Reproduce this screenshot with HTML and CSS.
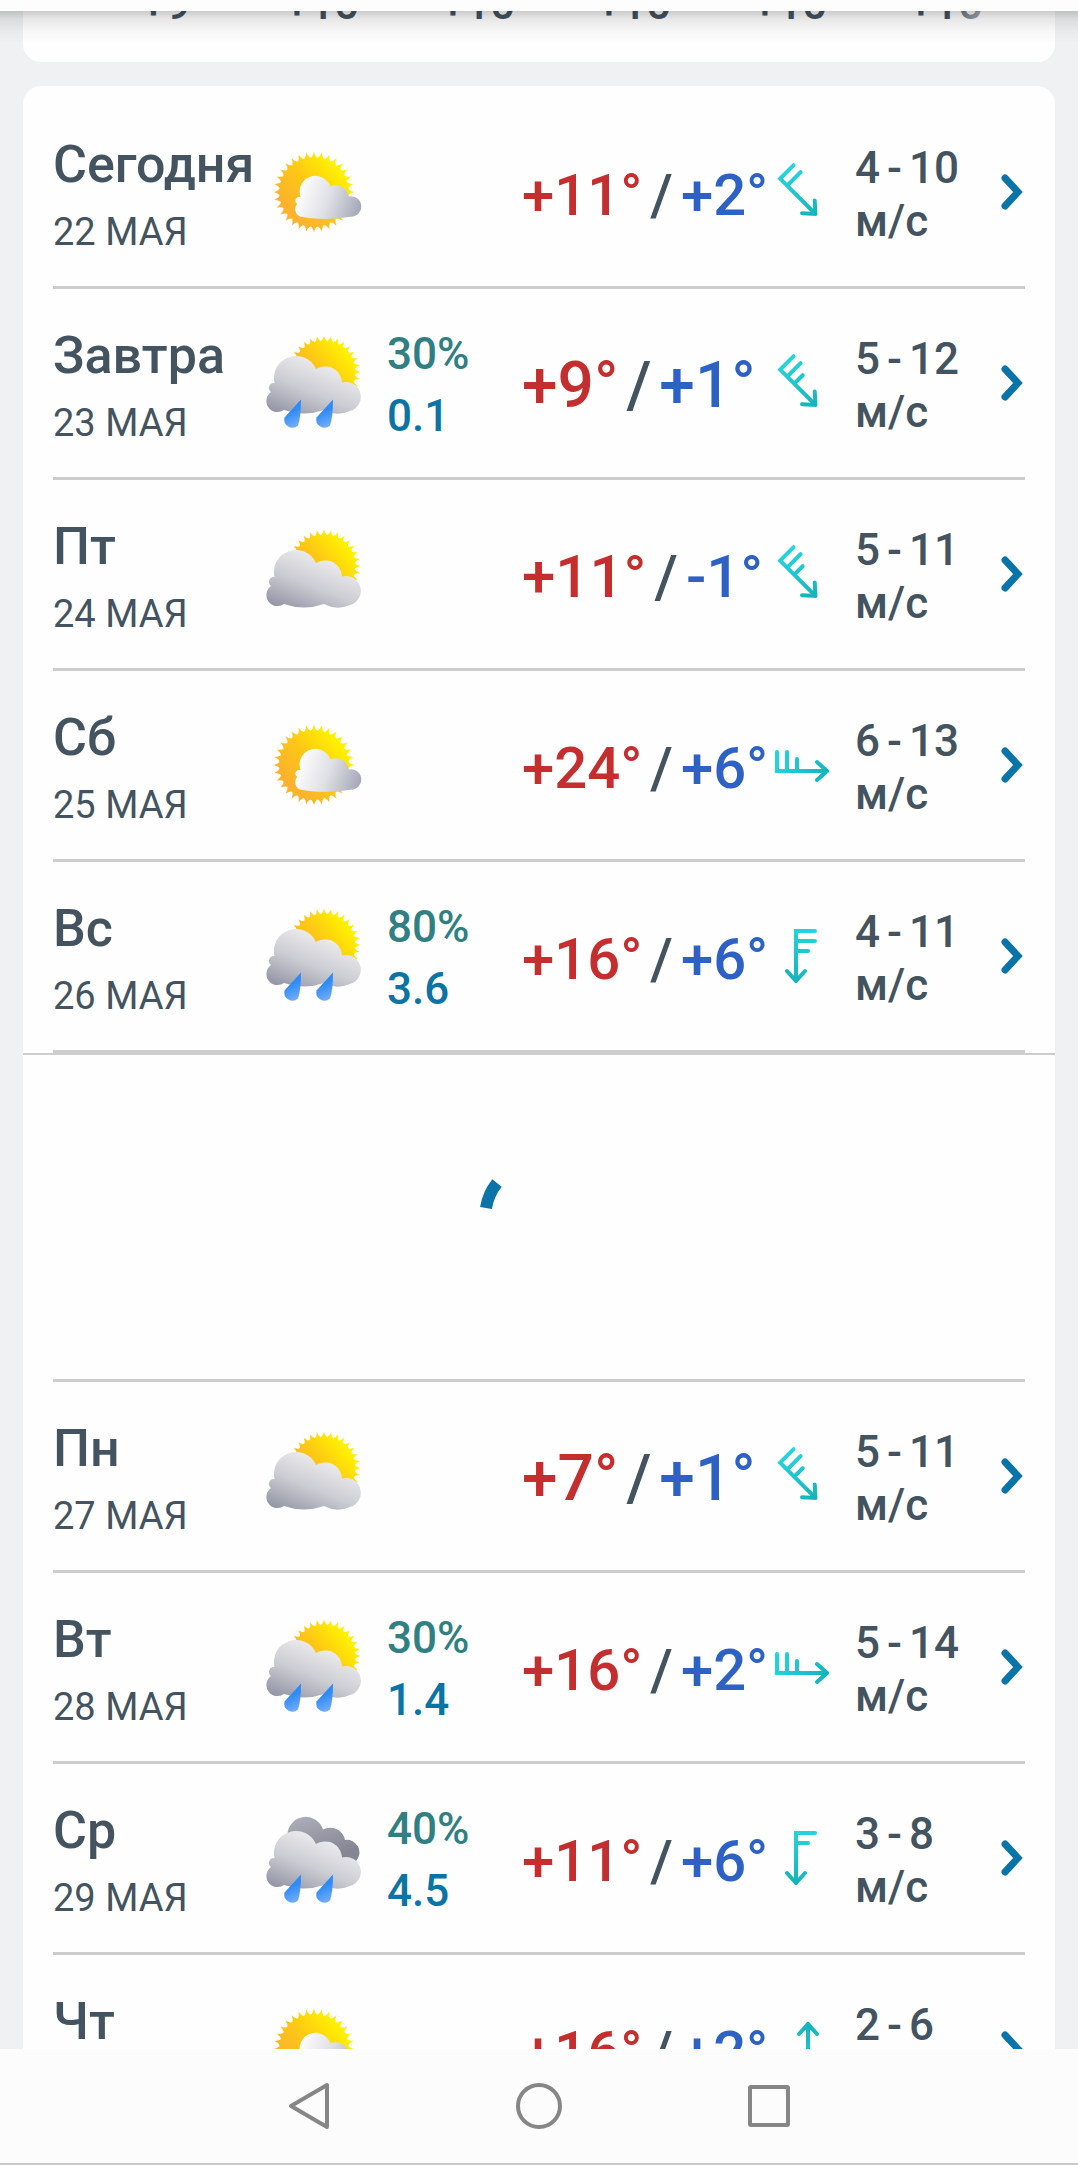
FILE: index.html
```html
<!DOCTYPE html>
<html lang="ru">
<head>
<meta charset="utf-8">
<meta name="viewport" content="width=device-width, initial-scale=1">
<title>Прогноз погоды</title>
<link rel="stylesheet" href="styles.css">
</head>
<body>
<svg class="defs" aria-hidden="true">
  <defs>
    <linearGradient id="g-sun" gradientUnits="userSpaceOnUse" x1="-24" y1="18" x2="24" y2="-22">
      <stop offset="0" stop-color="#fcb22c"/><stop offset=".5" stop-color="#fdc815"/><stop offset="1" stop-color="#fff000"/>
    </linearGradient>
    <linearGradient id="g-cloud" gradientUnits="userSpaceOnUse" x1="22" y1="84" x2="46" y2="26">
      <stop offset="0" stop-color="#9597a7"/><stop offset=".5" stop-color="#cccdd3"/><stop offset="1" stop-color="#ececee"/>
    </linearGradient>
    <linearGradient id="g-white" gradientUnits="userSpaceOnUse" x1="36" y1="48" x2="94" y2="68">
      <stop offset="0" stop-color="#fafafa"/><stop offset=".45" stop-color="#dfe0e5"/><stop offset="1" stop-color="#a4a7b7"/>
    </linearGradient>
    <linearGradient id="g-dark" gradientUnits="userSpaceOnUse" x1="60" y1="48" x2="46" y2="4">
      <stop offset="0" stop-color="#858694"/><stop offset="1" stop-color="#acacb8"/>
    </linearGradient>
    <linearGradient id="g-drop" gradientUnits="userSpaceOnUse" x1="22" y1="78" x2="30" y2="96">
      <stop offset="0" stop-color="#2f8bf6"/><stop offset="1" stop-color="#84b5f5"/>
    </linearGradient>
    <linearGradient id="g-wind" gradientUnits="userSpaceOnUse" x1="0" y1="20" x2="54" y2="38">
      <stop offset="0" stop-color="#22d6de"/><stop offset="1" stop-color="#14b2ba"/>
    </linearGradient>
    <g id="ray1"><path d="M-3.6-34 Q-1.200-35.5 0-40.500 Q1.200-35.5 3.6-34z" fill="#fff"/></g>
    <g id="ray2"><use href="#ray1"/><use href="#ray1" transform="rotate(11.25)"/></g>
    <g id="ray4"><use href="#ray2"/><use href="#ray2" transform="rotate(22.5)"/></g>
    <g id="ray8"><use href="#ray4"/><use href="#ray4" transform="rotate(45)"/></g>
    <g id="ray16"><use href="#ray8"/><use href="#ray8" transform="rotate(90)"/></g>
    <mask id="m-sun" maskUnits="userSpaceOnUse" x="-42" y="-42" width="84" height="84">
      <circle r="34.800" fill="#fff"/><use href="#ray16"/><use href="#ray16" transform="rotate(180)"/>
    </mask>
    <g id="sun"><rect x="-42" y="-42" width="84" height="84" fill="url(#g-sun)" mask="url(#m-sun)"/></g>
    <path id="cloud" fill="url(#g-cloud)" d="M18 78A11 11 0 0 1 5 60A5 5 0 0 1 8.500 51A22 22 0 0 1 50 37A17 17 0 0 1 76 50.500A14.800 14.800 0 0 1 84 79A30 30 0 0 1 58 78A60 60 0 0 1 18 78z"/>
    <path id="drop" fill="url(#g-drop)" d="M35 64.500L18.500 82.500A8.200 8.200 0 0 0 32 90.500Q35 82 35 64.500z"/>
    <symbol id="w-sun" viewBox="0 0 96 96">
      <use href="#sun" transform="translate(48 48)"/>
      <path fill="url(#g-white)" d="M36 73A8 8 0 0 1 31 60A4 4 0 0 1 34.500 53A15.600 15.600 0 0 1 64.500 42.500A12.500 12.500 0 0 1 82.500 52.500A10.300 10.300 0 1 1 85 72.800A150 150 0 0 1 36 73z"/>
    </symbol>
    <symbol id="w-cloud" viewBox="0 0 96 96">
      <use href="#sun" transform="translate(58 40) scale(.9)"/><use href="#cloud"/>
    </symbol>
    <symbol id="w-rain" viewBox="0 0 96 96">
      <use href="#sun" transform="translate(58 37) scale(.9)"/><use href="#cloud" y="-3"/>
      <use href="#drop"/><use href="#drop" x="32"/>
    </symbol>
    <symbol id="w-overcast" viewBox="0 0 96 96">
      <path fill="url(#g-dark)" d="M21.500 24A18.200 18.200 0 0 1 57 19.500A15 15 0 0 1 79 30A12.500 12.500 0 0 1 90 51L30 51z"/>
      <use href="#cloud" y="-3"/><use href="#drop"/><use href="#drop" x="32"/>
    </symbol>
    <symbol id="wind1" viewBox="0 0 54 54">
      <path class="barb" d="M2 14V33H52M12 21V33M42 24L52 33L42 42"/>
    </symbol>
    <symbol id="wind2" viewBox="0 0 54 54">
      <path class="barb" d="M2 14V33H52M12 14V33M42 24L52 33L42 42"/>
    </symbol>
    <symbol id="wind3" viewBox="0 0 54 54">
      <path class="barb" d="M2 14V33H52M12 14V33M22 21V33M42 24L52 33L42 42"/>
    </symbol>
    <symbol id="chevron" viewBox="0 0 24 36">
      <path d="M4 4L17 18L4 32" fill="none" stroke="#0a74a8" stroke-width="7" stroke-linecap="round" stroke-linejoin="miter"/>
    </symbol>
  </defs>
</svg>

<div class="app">
  <header class="topbar"></header>
  <main class="content">
    <section class="card hourly" aria-label="Температура по часам">
      <span>+9</span><span>+10</span><span>+10</span><span>+10</span><span>+10</span><span>+10</span>
    </section>

    <section class="card daily" aria-label="Прогноз по дням">
      <a class="row" href="#d22">
        <span class="day"><b>Сегодня</b><small>22 МАЯ</small></span>
        <svg class="weather"><use href="#w-sun"/></svg>
        <span class="rain"></span>
        <span class="temp"><span class="hi">+11°</span> <span>/</span> <span class="lo">+2°</span></span>
        <svg class="wind-icon se"><use href="#wind2"/></svg>
        <span class="wind"><span class="speed"><span>4</span> <span>-</span> <span>10</span></span><span>м/с</span></span>
        <svg class="chevron"><use href="#chevron"/></svg>
      </a>
      <a class="row" href="#d23">
        <span class="day"><b>Завтра</b><small>23 МАЯ</small></span>
        <svg class="weather"><use href="#w-rain"/></svg>
        <span class="rain"><span class="chance">30%</span><span>0.1</span></span>
        <span class="temp large"><span class="hi">+9°</span> <span>/</span> <span class="lo">+1°</span></span>
        <svg class="wind-icon se"><use href="#wind3"/></svg>
        <span class="wind"><span class="speed"><span>5</span> <span>-</span> <span>12</span></span><span>м/с</span></span>
        <svg class="chevron"><use href="#chevron"/></svg>
      </a>
      <a class="row" href="#d24">
        <span class="day"><b>Пт</b><small>24 МАЯ</small></span>
        <svg class="weather"><use href="#w-cloud"/></svg>
        <span class="rain"></span>
        <span class="temp medium"><span class="hi">+11°</span> <span>/</span> <span class="lo">-1°</span></span>
        <svg class="wind-icon se"><use href="#wind3"/></svg>
        <span class="wind"><span class="speed"><span>5</span> <span>-</span> <span>11</span></span><span>м/с</span></span>
        <svg class="chevron"><use href="#chevron"/></svg>
      </a>
      <a class="row" href="#d25">
        <span class="day"><b>Сб</b><small>25 МАЯ</small></span>
        <svg class="weather"><use href="#w-sun"/></svg>
        <span class="rain"></span>
        <span class="temp"><span class="hi">+24°</span> <span>/</span> <span class="lo">+6°</span></span>
        <svg class="wind-icon"><use href="#wind3"/></svg>
        <span class="wind"><span class="speed"><span>6</span> <span>-</span> <span>13</span></span><span>м/с</span></span>
        <svg class="chevron"><use href="#chevron"/></svg>
      </a>
      <a class="row" href="#d26">
        <span class="day"><b>Вс</b><small>26 МАЯ</small></span>
        <svg class="weather"><use href="#w-rain"/></svg>
        <span class="rain"><span class="chance">80%</span><span>3.6</span></span>
        <span class="temp"><span class="hi">+16°</span> <span>/</span> <span class="lo">+6°</span></span>
        <svg class="wind-icon s"><use href="#wind3"/></svg>
        <span class="wind"><span class="speed"><span>4</span> <span>-</span> <span>11</span></span><span>м/с</span></span>
        <svg class="chevron"><use href="#chevron"/></svg>
      </a>

      <div class="loading" role="status" aria-label="Загрузка">
        <svg class="spinner" viewBox="0 0 120 120"><path d="M7 51A54 54 0 0 1 18 26" fill="none" stroke="#0a74a8" stroke-width="12"/></svg>
      </div>

      <a class="row first" href="#d27">
        <span class="day"><b>Пн</b><small>27 МАЯ</small></span>
        <svg class="weather"><use href="#w-cloud"/></svg>
        <span class="rain"></span>
        <span class="temp large"><span class="hi">+7°</span> <span>/</span> <span class="lo">+1°</span></span>
        <svg class="wind-icon se"><use href="#wind3"/></svg>
        <span class="wind"><span class="speed"><span>5</span> <span>-</span> <span>11</span></span><span>м/с</span></span>
        <svg class="chevron"><use href="#chevron"/></svg>
      </a>
      <a class="row" href="#d28">
        <span class="day"><b>Вт</b><small>28 МАЯ</small></span>
        <svg class="weather"><use href="#w-rain"/></svg>
        <span class="rain"><span class="chance">30%</span><span>1.4</span></span>
        <span class="temp"><span class="hi">+16°</span> <span>/</span> <span class="lo">+2°</span></span>
        <svg class="wind-icon"><use href="#wind3"/></svg>
        <span class="wind"><span class="speed"><span>5</span> <span>-</span> <span>14</span></span><span>м/с</span></span>
        <svg class="chevron"><use href="#chevron"/></svg>
      </a>
      <a class="row" href="#d29">
        <span class="day"><b>Ср</b><small>29 МАЯ</small></span>
        <svg class="weather"><use href="#w-overcast"/></svg>
        <span class="rain"><span class="chance">40%</span><span>4.5</span></span>
        <span class="temp"><span class="hi">+11°</span> <span>/</span> <span class="lo">+6°</span></span>
        <svg class="wind-icon s"><use href="#wind1"/></svg>
        <span class="wind"><span class="speed"><span>3</span> <span>-</span> <span>8</span></span><span>м/с</span></span>
        <svg class="chevron"><use href="#chevron"/></svg>
      </a>
      <a class="row" href="#d30">
        <span class="day"><b>Чт</b><small>30 МАЯ</small></span>
        <svg class="weather"><use href="#w-sun"/></svg>
        <span class="rain"></span>
        <span class="temp"><span class="hi">+16°</span> <span>/</span> <span class="lo">+2°</span></span>
        <svg class="wind-icon n"><use href="#wind1"/></svg>
        <span class="wind"><span class="speed"><span>2</span> <span>-</span> <span>6</span></span><span>м/с</span></span>
        <svg class="chevron"><use href="#chevron"/></svg>
      </a>
    </section>
  </main>

  <nav class="navbar" aria-label="Системная навигация">
    <button type="button" aria-label="Назад"><svg viewBox="0 0 48 48"><path d="M42 3V45L6 24z"/></svg></button>
    <button type="button" aria-label="Домой"><svg viewBox="0 0 48 48"><circle cx="24" cy="24" r="21"/></svg></button>
    <button type="button" aria-label="Недавние"><svg viewBox="0 0 48 48"><rect x="5" y="5" width="38" height="38" rx="1"/></svg></button>
  </nav>
</div>
</body>
</html>
```

FILE: styles.css
```css
* {
  box-sizing: border-box;
}

body {
  margin: 0;
  background: #eff1f3;
  color: #435460;
  font-family: Roboto, "Noto Sans", sans-serif;
  font-weight: 500;
}

.defs {
  position: absolute;
  width: 0;
  height: 0;
}

.app {
  display: flex;
  flex-direction: column;
  height: 100vh;
}

.topbar {
  position: fixed;
  z-index: 1;
  top: 0;
  left: 0;
  right: 0;
  height: 11px;
  background: #fdfdfd;
}

.topbar::after {
  content: "";
  position: absolute;
  top: 100%;
  left: 0;
  right: 0;
  height: 32px;
  background: linear-gradient(rgba(0, 0, 0, .2), rgba(0, 0, 0, .09) 25%, rgba(0, 0, 0, .03) 60%, transparent);
}

.content {
  flex: 1;
  min-height: 0;
  overflow: hidden;
  padding: 0 23px;
}

.card {
  background: #fefefe;
  border-radius: 18px;
}

.hourly {
  position: relative;
  display: grid;
  grid-template-columns: repeat(6, 1fr);
  align-content: end;
  height: 62px;
  padding: 0 31px 36px 65px;
  border-radius: 0 0 18px 18px;
  overflow: hidden;
  font-size: 44px;
  line-height: 44px;
  text-align: center;
}

/* fades out the hours that continue past the right edge */
.hourly::after {
  content: "";
  position: absolute;
  top: 0;
  right: 0;
  bottom: 0;
  width: 97px;
  background: linear-gradient(90deg, rgba(254, 254, 254, .2), #fefefe 60%);
}

.daily {
  margin-top: 24px;
  padding-top: 12px;
}

.row {
  display: grid;
  grid-template-columns: minmax(0, 1fr) 121px 135px 253px 80px 146px 24px;
  align-items: center;
  height: 191px;
  margin: 0 30px;
  border-bottom: 3px solid #cdcdcd;
  color: inherit;
  text-decoration: none;
  white-space: nowrap;
}

.row.first {
  height: 194px;
  border-top: 3px solid #cdcdcd;
}

.day {
  display: flex;
  flex-direction: column;
}

.day b {
  font-size: 52px;
  line-height: 80px;
  font-weight: 500;
}

.day small {
  font-size: 38px;
  line-height: 54px;
  font-weight: 400;
}

.weather {
  width: 96px;
  height: 96px;
}

.rain {
  display: flex;
  flex-direction: column;
  padding-top: 4px;
  color: #0a74a4;
  font-size: 44px;
  line-height: 62px;
}

.chance {
  color: #2f7f83;
}

.temp {
  display: flex;
  gap: 8px;
  padding-top: 6px;
  font-size: 58px;
  line-height: 72px;
}

.temp.medium {
  font-size: 60px;
}

.temp.large {
  font-size: 64px;
}

.hi {
  color: #c42e2e;
}

.lo {
  color: #2d62c4;
}

.wind-icon {
  width: 54px;
  height: 54px;
}

.wind-icon.se {
  transform: rotate(45deg);
}

.wind-icon.s {
  transform: rotate(90deg);
}

.wind-icon.n {
  transform: rotate(-90deg);
}

.barb {
  fill: none;
  stroke: url(#g-wind);
  stroke-width: 4;
  stroke-linecap: round;
}

.wind {
  display: flex;
  flex-direction: column;
  padding-top: 6px;
  font-size: 44px;
  line-height: 53px;
}

.speed {
  display: flex;
  gap: 7px;
}

.chevron {
  width: 24px;
  height: 36px;
}

.loading {
  display: flex;
  align-items: center;
  justify-content: center;
  height: 326px;
  border-top: 2px solid #cdcdcd;
}

.spinner {
  width: 120px;
  height: 120px;
}

.navbar {
  display: flex;
  justify-content: center;
  height: 116px;
  background: #fcfcfc;
  border-bottom: 2px solid #c8c8c8;
}

.navbar button {
  width: 230px;
  padding: 0;
  border: 0;
  background: none;
}

.navbar svg {
  display: block;
  width: 48px;
  height: 48px;
  margin: auto;
  fill: none;
  stroke: #868686;
  stroke-width: 4;
  stroke-linejoin: round;
}
```
